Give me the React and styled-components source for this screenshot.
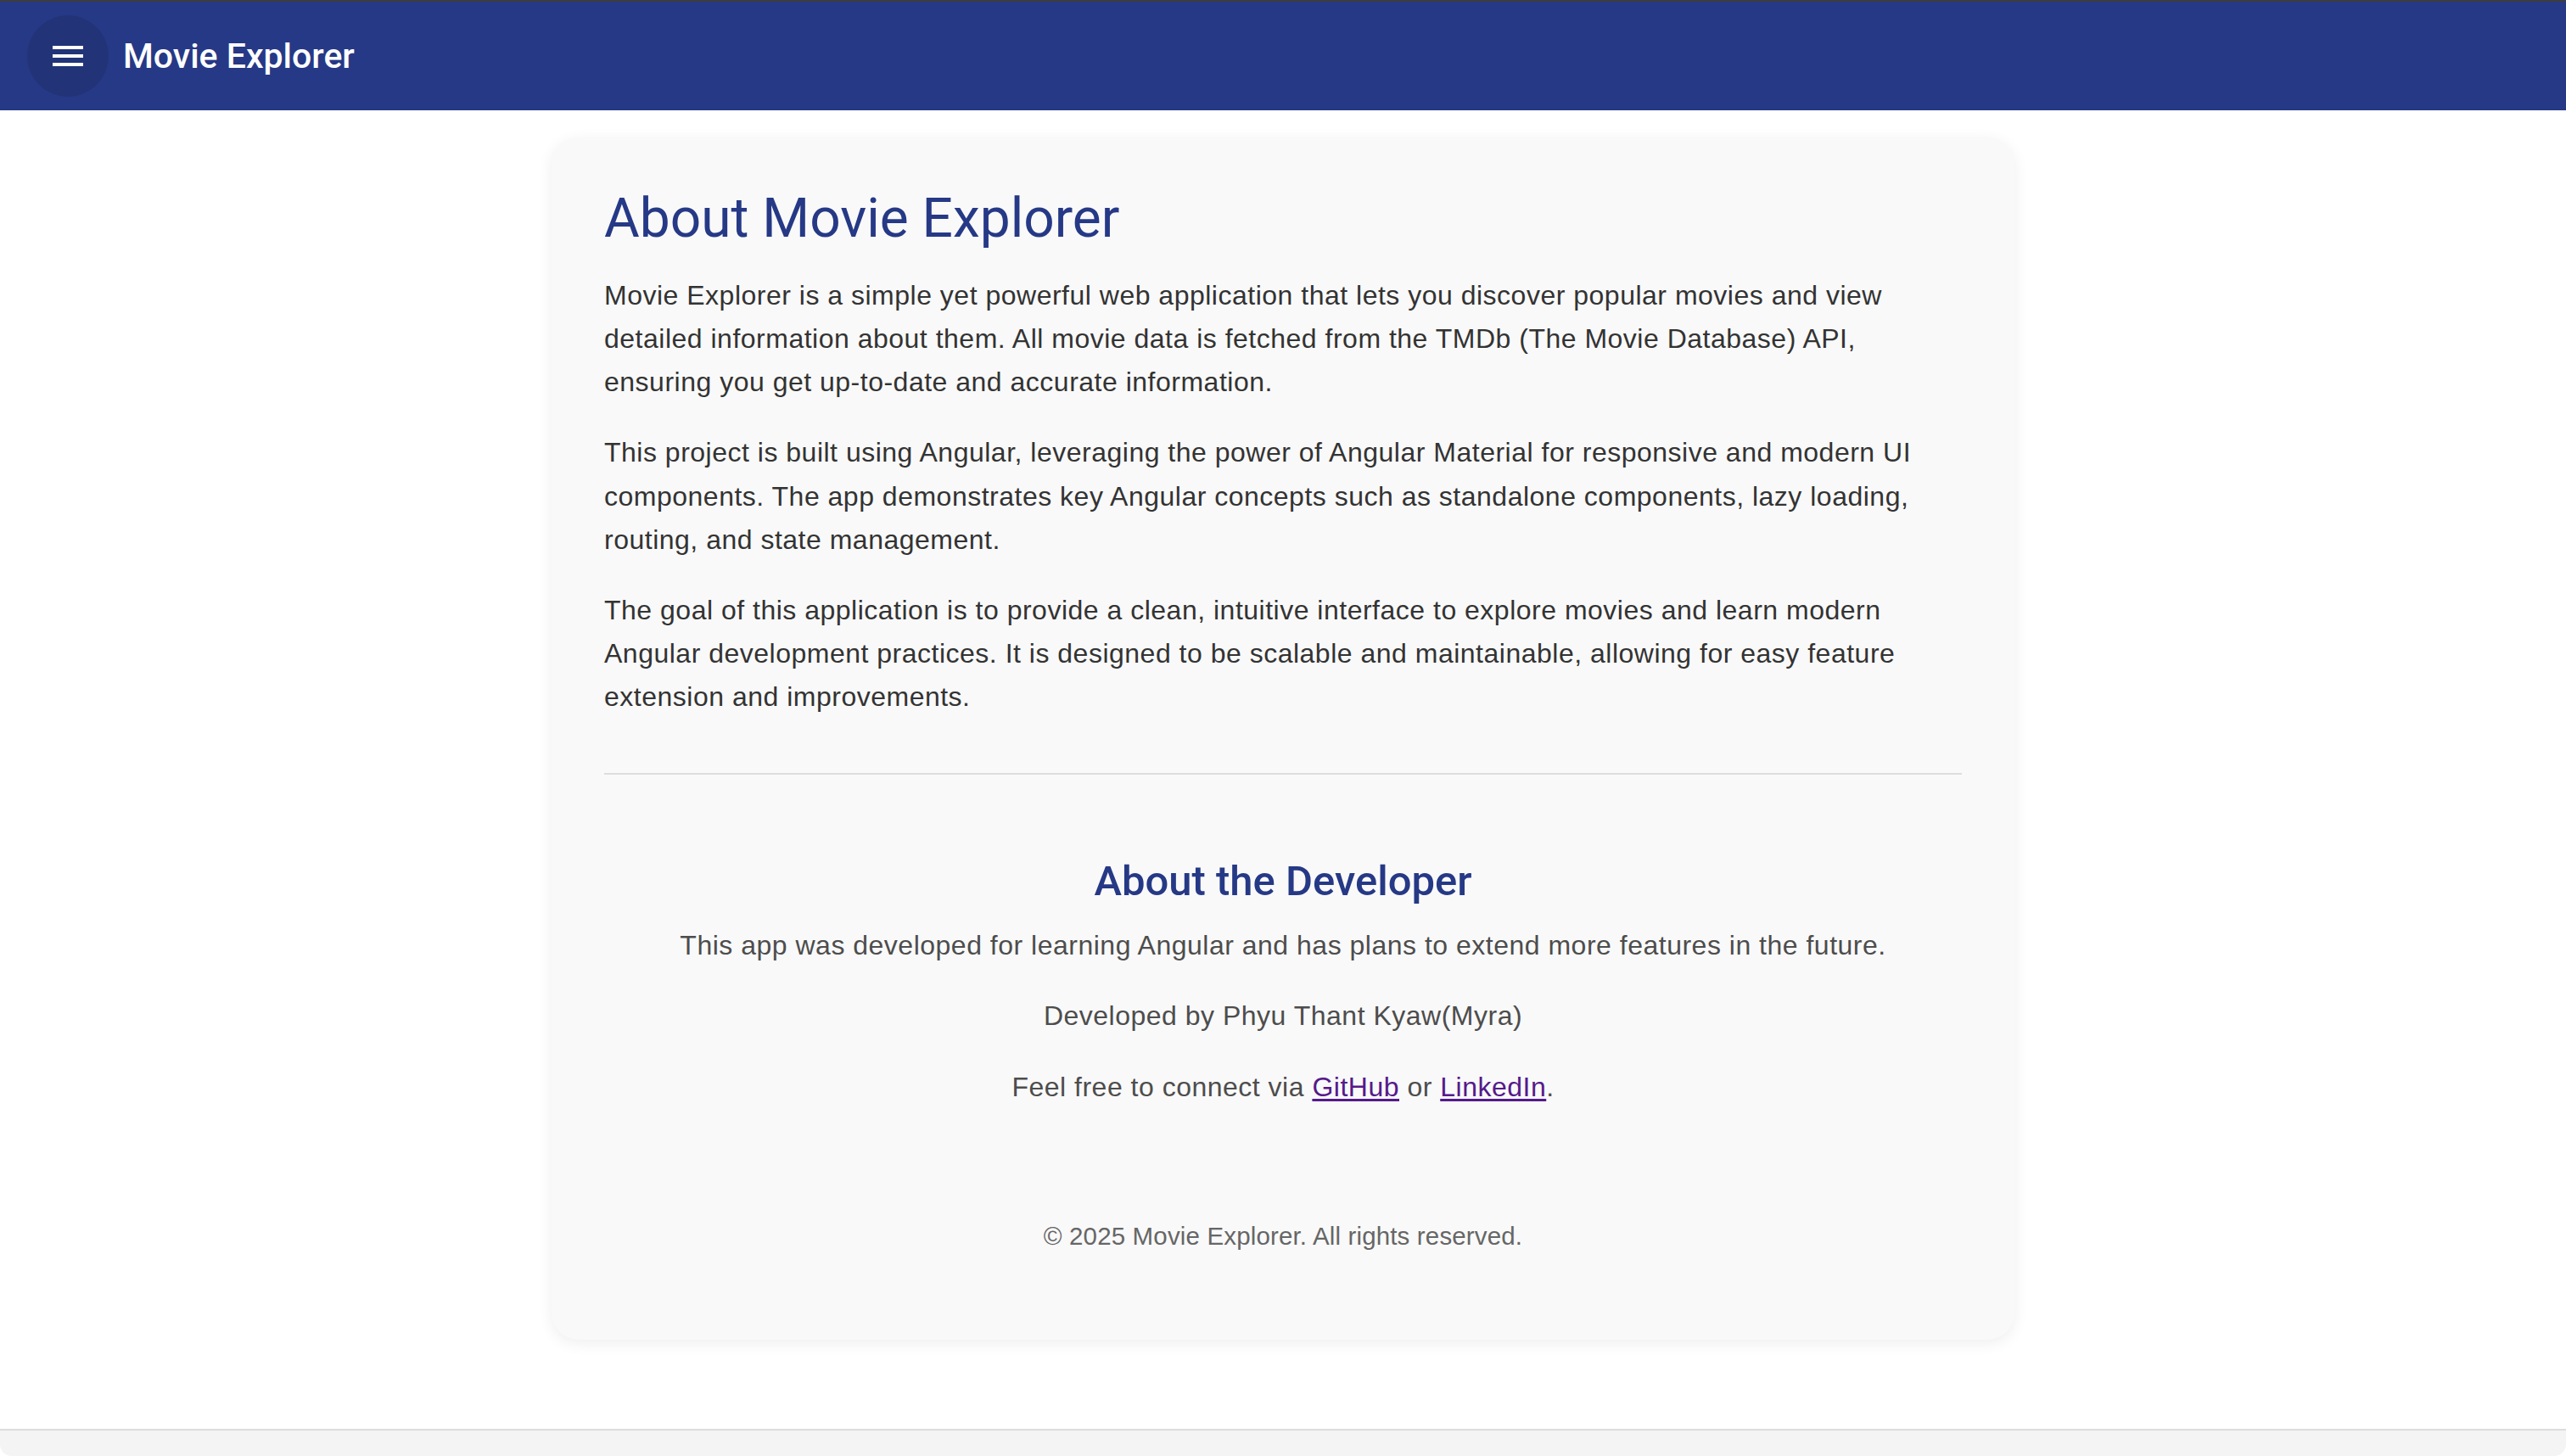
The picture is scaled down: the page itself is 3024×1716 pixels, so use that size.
import React from "react";
import styled, { createGlobalStyle } from "styled-components";

const GlobalStyle = createGlobalStyle`
  html, body {
    margin: 0;
    padding: 0;
    background: #ffffff;
    font-family: "Liberation Sans", Arial, Helvetica, sans-serif;
  }
  * {
    box-sizing: border-box;
  }
`;

const Page = styled.div`
  display: flex;
  flex-direction: column;
  height: 100vh;
  overflow: hidden;
`;

const TopBar = styled.header`
  flex: none;
  height: 130px;
  border-top: 2px solid #3d3d3f;
  background: #263986;
  display: flex;
  align-items: center;
  padding: 0 32px;
  gap: 17px;
`;

const MenuButton = styled.button`
  width: 96px;
  height: 96px;
  border: none;
  border-radius: 50%;
  background: rgba(0, 0, 0, 0.1);
  display: grid;
  place-items: center;
  padding: 0;
  cursor: pointer;
`;

const AppTitle = styled.span`
  font-family: Roboto, "Liberation Sans", sans-serif;
  font-weight: 500;
  font-size: 41px;
  color: #ffffff;
`;

const Main = styled.main`
  flex: 1;
  display: flex;
  justify-content: center;
  align-items: flex-start;
  padding-top: 32px;
`;

const Card = styled.section`
  width: 1724px;
  padding: 58px 62px 99px;
  background: #f9f9f9;
  border-radius: 32px;
  box-shadow: 0 4px 18px rgba(0, 0, 0, 0.07);
`;

const Heading = styled.h1`
  margin: 0 0 26px;
  font-family: Roboto, "Liberation Sans", sans-serif;
  font-weight: 400;
  font-size: 64px;
  line-height: 1.2;
  color: #263986;
`;

const Paragraph = styled.p`
  margin: 0 0 32px;
  font-size: 32px;
  line-height: 1.6;
  color: #333333;
  letter-spacing: 0.5px;
`;

const Divider = styled.hr`
  margin: 64px 0 0;
  border: none;
  height: 2px;
  background: #dddddd;
`;

const DevSection = styled.div`
  padding-top: 97px;
  text-align: center;
`;

const SubHeading = styled.h2`
  margin: 0 0 20px;
  font-family: Roboto, "Liberation Sans", sans-serif;
  font-weight: 500;
  font-size: 49px;
  line-height: 1.2;
  color: #263986;
`;

const DevLine = styled.p`
  margin: 0 0 32px;
  font-size: 32px;
  line-height: 1.6;
  color: #4d4d4d;
  letter-spacing: 0.5px;
`;

const Link = styled.a`
  color: #551a8b;
  text-decoration: underline;
  text-underline-offset: 3px;
`;

const Copyright = styled.p`
  margin: 126px 0 0;
  font-size: 29.5px;
  line-height: 1.6;
  color: #666666;
  text-align: center;
  letter-spacing: 0.15px;
`;

const BottomStrip = styled.div`
  flex: none;
  height: 32px;
  border-top: 2px solid #dcdcdc;
  background: #f4f4f4;
  border-radius: 0 0 14px 14px;
`;

function MenuIcon() {
  return (
    <svg width="48" height="48" viewBox="0 0 24 24" fill="#ffffff">
      <path d="M3 18h18v-2H3v2zm0-5h18v-2H3v2zm0-7v2h18V6H3z" />
    </svg>
  );
}

export default function App() {
  return (
    <>
      <GlobalStyle />
      <Page>
        <TopBar>
          <MenuButton aria-label="menu">
            <MenuIcon />
          </MenuButton>
          <AppTitle>Movie Explorer</AppTitle>
        </TopBar>
        <Main>
          <Card>
            <Heading>About Movie Explorer</Heading>
            <Paragraph>
              Movie Explorer is a simple yet powerful web application that lets
              you discover popular movies and view detailed information about
              them. All movie data is fetched from the TMDb (The Movie Database)
              API, ensuring you get up-to-date and accurate information.
            </Paragraph>
            <Paragraph>
              This project is built using Angular, leveraging the power of
              Angular Material for responsive and modern UI components. The app
              demonstrates key Angular concepts such as standalone components,
              lazy loading, routing, and state management.
            </Paragraph>
            <Paragraph>
              The goal of this application is to provide a clean, intuitive
              interface to explore movies and learn modern Angular development
              practices. It is designed to be scalable and maintainable,
              allowing for easy feature extension and improvements.
            </Paragraph>
            <Divider />
            <DevSection>
              <SubHeading>About the Developer</SubHeading>
              <DevLine>
                This app was developed for learning Angular and has plans to
                extend more features in the future.
              </DevLine>
              <DevLine>Developed by Phyu Thant Kyaw(Myra)</DevLine>
              <DevLine>
                Feel free to connect via <Link href="#">GitHub</Link> or{" "}
                <Link href="#">LinkedIn</Link>.
              </DevLine>
              <Copyright>© 2025 Movie Explorer. All rights reserved.</Copyright>
            </DevSection>
          </Card>
        </Main>
        <BottomStrip />
      </Page>
    </>
  );
}
